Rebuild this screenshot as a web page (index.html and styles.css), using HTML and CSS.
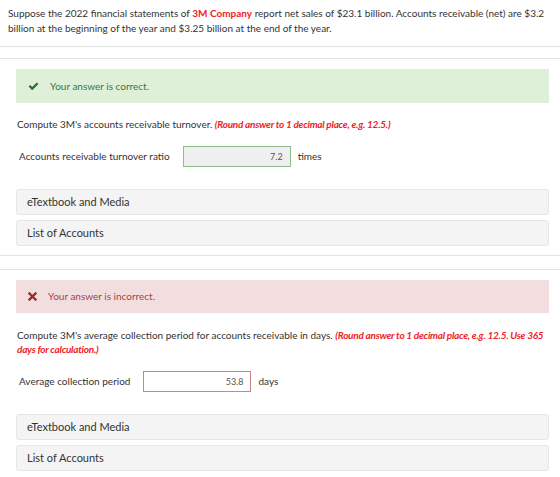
FILE: index.html
```html
<!DOCTYPE html>
<html lang="en">
<head>
    <meta charset="UTF-8">
    <title>Accounts Receivable</title>
    <link rel="stylesheet" href="styles.css">
</head>
<body>
<div class="intro">
    Suppose the 2022 financial statements of <span class="company">3M Company</span> report net sales of $23.1 billion. Accounts receivable (net) are $3.2 billion at the beginning of the year and $3.25 billion at the end of the year.
</div>

<div class="part">
    <div class="alert alert-correct">
        <svg class="alert-icon" width="11" height="9" viewBox="0 0 11 9">
            <path d="M0.6 4.6 L2.2 3 L4.2 5 L8.8 0.4 L10.4 2 L4.2 8.2 Z" fill="#2f6a2f"/>
        </svg>
        <span>Your answer is correct.</span>
    </div>
    <p class="question">
        Compute 3M's accounts receivable turnover. <span class="hint">(Round answer to 1 decimal place, e.g. 12.5.)</span>
    </p>
    <div class="answer-row">
        <label class="answer-label">Accounts receivable turnover ratio</label>
        <div class="answer-box answer-correct">7.2</div>
        <span class="unit">times</span>
    </div>
    <div class="resource">eTextbook and Media</div>
    <div class="resource">List of Accounts</div>
</div>

<div class="part">
    <div class="alert alert-incorrect">
        <svg class="alert-icon" width="9" height="9" viewBox="0 0 9 9">
            <path d="M1.5 1.5 L7.5 7.5 M7.5 1.5 L1.5 7.5" stroke="#9b2e2a" stroke-width="2.4" stroke-linecap="square"/>
        </svg>
        <span>Your answer is incorrect.</span>
    </div>
    <p class="question">
        Compute 3M's average collection period for accounts receivable in days. <span class="hint">(Round answer to 1 decimal place, e.g. 12.5. Use 365 days for calculation.)</span>
    </p>
    <div class="answer-row">
        <label class="answer-label">Average collection period</label>
        <div class="answer-box answer-incorrect">53.8</div>
        <span class="unit">days</span>
    </div>
    <div class="resource">eTextbook and Media</div>
    <div class="resource">List of Accounts</div>
</div>
</body>
</html>
```

FILE: styles.css
```css
html, body {
    margin: 0;
    background: #fff;
    color: #333;
    font-family: Lato, "Open Sans", sans-serif;
    font-size: 10px;
    line-height: 15px;
}

.intro {
    padding: 6px 8px 10px;
    border-bottom: 1px solid #e3e3e3;
}

.company {
    color: #ee1c25;
    font-weight: bold;
}

.part {
    margin-top: 11px;
    padding: 10px 11px 9px 16px;
    border-top: 1px solid #e3e3e3;
    border-bottom: 1px solid #e3e3e3;
}

.part + .part {
    margin-top: 13px;
}

.alert {
    display: flex;
    align-items: center;
    height: 34px;
    padding-left: 12px;
    box-sizing: border-box;
}

.alert-icon {
    margin-right: 11px;
}

.alert-correct {
    background: #dff0d8;
    color: #3c763d;
}

.alert-incorrect {
    height: 33px;
    background: #f2dede;
    color: #a94442;
}

.question {
    margin: 14px 0 0 1px;
    line-height: 14.5px;
}

.alert-incorrect + .question {
    margin-top: 15px;
}

.hint {
    color: #ee1c25;
    font-weight: bold;
    font-style: italic;
    letter-spacing: -0.25px;
}

.answer-row {
    display: flex;
    align-items: center;
    margin: 14px 0 22px 3px;
}

.answer-label {
    margin-right: 13px;
}

.answer-box {
    width: 108px;
    height: 21px;
    box-sizing: border-box;
    padding-right: 7px;
    text-align: right;
    line-height: 19px;
    font-size: 9px;
    color: #555;
}

.answer-correct {
    border: 1px solid #8fbc8a;
    background: #efefef;
}

.answer-incorrect {
    border: 1px solid #cf8585;
    background: #fff;
}

.unit {
    margin-left: 7px;
}

.resource {
    height: 26px;
    margin-bottom: 5px;
    padding-left: 10px;
    box-sizing: border-box;
    display: flex;
    align-items: center;
    background: #f4f4f4;
    border: 1px solid #e6e6e6;
    border-radius: 3px;
    color: #333;
    font-size: 11px;
}

.resource:last-child {
    margin-bottom: 0;
}
```
